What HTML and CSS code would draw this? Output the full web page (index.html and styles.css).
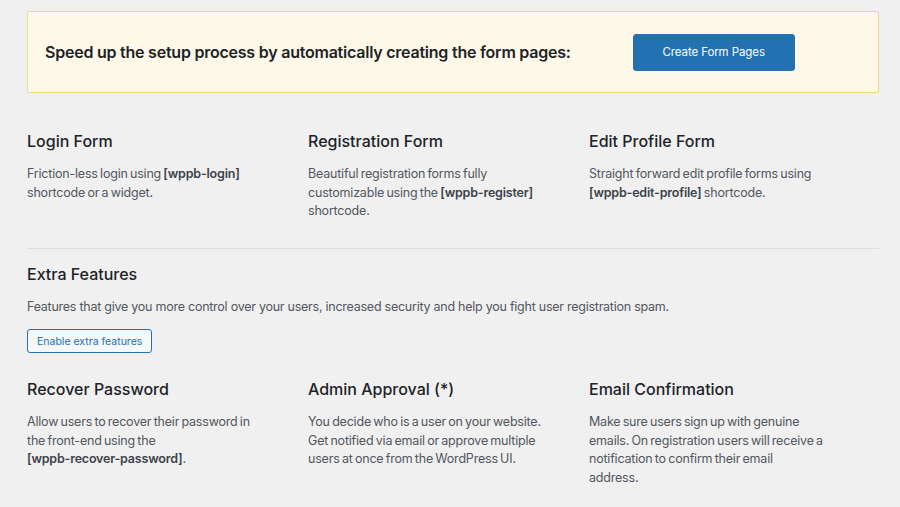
FILE: index.html
```html
<!DOCTYPE html>
<html>
<head>
<meta charset="utf-8">
<link rel="stylesheet" href="styles.css">
</head>
<body>
<div class="page">
  <div class="notice">
    <p class="notice-text">Speed up the setup process by automatically creating the form pages:</p>
    <button class="btn-primary">Create Form Pages</button>
  </div>

  <div class="cols first-row">
    <div class="col">
      <h3>Login Form</h3>
      <p>Friction-less login using <strong>[wppb-login]</strong> shortcode or a widget.</p>
    </div>
    <div class="col">
      <h3>Registration Form</h3>
      <p>Beautiful registration forms fully customizable using the <strong>[wppb-register]</strong> shortcode.</p>
    </div>
    <div class="col">
      <h3>Edit Profile Form</h3>
      <p>Straight forward edit profile forms using <strong>[wppb-edit-profile]</strong> shortcode.</p>
    </div>
  </div>

  <hr class="divider">

  <div class="extra">
    <h3>Extra Features</h3>
    <p class="extra-desc">Features that give you more control over your users, increased security and help you fight user registration spam.</p>
    <button class="btn-secondary">Enable extra features</button>
  </div>

  <div class="cols second-row">
    <div class="col">
      <h3>Recover Password</h3>
      <p>Allow users to recover their password in the front-end using the <strong>[wppb-recover-password]</strong>.</p>
    </div>
    <div class="col">
      <h3>Admin Approval (*)</h3>
      <p>You decide who is a user on your website. Get notified via email or approve multiple users at once from the WordPress UI.</p>
    </div>
    <div class="col">
      <h3>Email Confirmation</h3>
      <p>Make sure users sign up with genuine emails. On registration users will receive a notification to confirm their email address.</p>
    </div>
  </div>
</div>
</body>
</html>
```

FILE: styles.css
```css
html, body {
  margin: 0;
  padding: 0;
  background: #f0f0f1;
}
body {
  font-family: Inter, "Noto Sans", "Liberation Sans", sans-serif;
  color: #1d2327;
}
.page {
  padding: 11px 21px 0 27px;
}
.notice {
  display: flex;
  align-items: center;
  gap: 62px;
  height: 80px;
  padding: 0 17px;
  background: #fdf8e7;
  border: 1px solid #f3d58a;
  border-radius: 2px;
}
.notice-text {
  margin: 0;
  font-size: 16px;
  font-weight: 600;
  letter-spacing: -0.23px;
  color: #1d2327;
}
.btn-primary {
  width: 162px;
  height: 37px;
  background: #2271b1;
  border: 1px solid #2271b1;
  border-radius: 3px;
  color: #fff;
  font-family: inherit;
  font-size: 11.5px;
  letter-spacing: -0.1px;
  padding: 0;
}
.cols {
  display: grid;
  grid-template-columns: 281px 281px 281px;
}
h3 {
  margin: 0;
  font-size: 16px;
  line-height: 22px;
  font-weight: 500;
  color: #1d2327;
}
.col p, .extra-desc {
  margin: 13px 0 0;
  font-size: 12.5px;
  line-height: 18.5px;
  letter-spacing: -0.25px;
  color: #50575e;
}
.col p {
  max-width: 234px;
  letter-spacing: -0.2px;
  word-spacing: -1px;
}
strong {
  font-weight: 600;
  color: #3c434a;
  white-space: nowrap;
}
.first-row {
  margin-top: 37px;
}
.divider {
  margin: 27px 0 0;
  border: 0;
  height: 1px;
  background: #dcdcde;
}
.extra {
  margin-top: 14px;
}
.btn-secondary {
  display: block;
  margin-top: 13px;
  height: 24px;
  padding: 0 9px;
  background: #f6f7f7;
  border: 1px solid #2271b1;
  border-radius: 3px;
  color: #2271b1;
  font-family: inherit;
  font-size: 10.5px;
}
.second-row {
  margin-top: 25px;
}
```
